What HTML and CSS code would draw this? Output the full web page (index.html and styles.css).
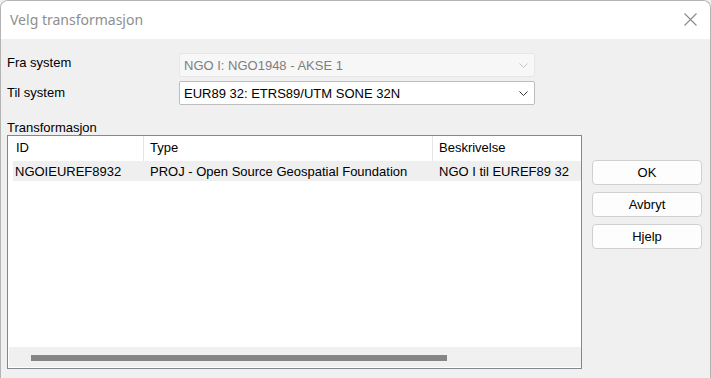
FILE: index.html
```html
<!DOCTYPE html>
<html>
<head>
<meta charset="utf-8">
<title>Velg transformasjon</title>
<link rel="stylesheet" href="styles.css">
</head>
<body>
<div class="window">
  <div class="titlebar">
    <span class="title">Velg transformasjon</span>
    <svg class="close" width="13" height="13" viewBox="0 0 13 13"><path d="M0.5 0.5 L12.5 12.5 M12.5 0.5 L0.5 12.5" stroke="#8a8a8a" stroke-width="1.1" fill="none"/></svg>
  </div>
  <div class="content">
    <div class="form">
      <label class="lbl lbl-fra">Fra system</label>
      <div class="combo disabled">
        <span>NGO I: NGO1948 - AKSE 1</span>
        <svg width="9" height="5" viewBox="0 0 9 5"><path d="M0.5 0.5 L4.5 4.5 L8.5 0.5" stroke="#c4c4c4" fill="none"/></svg>
      </div>
      <label class="lbl lbl-til">Til system</label>
      <div class="combo">
        <span>EUR89 32: ETRS89/UTM SONE 32N</span>
        <svg width="9" height="5" viewBox="0 0 9 5"><path d="M0.5 0.5 L4.5 4.5 L8.5 0.5" stroke="#333" fill="none"/></svg>
      </div>
    </div>
    <div class="section-lbl">Transformasjon</div>
    <div class="main">
      <div class="listbox">
        <div class="header">
          <div class="hcell c1">ID</div>
          <div class="hcell c2">Type</div>
          <div class="hcell c3">Beskrivelse</div>
        </div>
        <div class="rows">
          <div class="row selected">
            <div class="cell r1">NGOIEUREF8932</div>
            <div class="cell r2">PROJ - Open Source Geospatial Foundation</div>
            <div class="cell r3">NGO I til EUREF89 32</div>
          </div>
        </div>
        <div class="hscroll"><div class="thumb"></div></div>
      </div>
      <div class="buttons">
        <button class="btn">OK</button>
        <button class="btn">Avbryt</button>
        <button class="btn">Hjelp</button>
      </div>
    </div>
  </div>
</div>
</body>
</html>
```
FILE: styles.css
```css
html, body {
  margin: 0;
  padding: 0;
  overflow: hidden;
  background: #f0f0f0;
}
body {
  font-family: "Liberation Sans", Arial, sans-serif;
  font-size: 13px;
  color: #000;
}
.window {
  width: 711px;
  height: 378px;
  box-sizing: border-box;
  border: 1px solid #b4b4b4;
  border-bottom: none;
  border-radius: 8px 8px 0 0;
  background: #f0f0f0;
  overflow: hidden;
}
.titlebar {
  height: 38px;
  background: #fff;
  display: flex;
  align-items: center;
  justify-content: space-between;
  padding: 0 13px 0 9px;
}
.title {
  font-family: "Noto Sans", "Open Sans", sans-serif;
  font-size: 14px;
  color: #8e8e8e;
  margin-top: -2px;
}
.close {
  display: block;
  margin-top: -1px;
}
.content {
  padding: 14px 8px 0 6px;
}
.form {
  display: grid;
  grid-template-columns: 172px 356px;
  row-gap: 4px;
}
.lbl {
  line-height: 15px;
}
.lbl-fra {
  padding-top: 2px;
}
.lbl-til {
  padding-top: 4px;
}
.combo {
  height: 24px;
  box-sizing: border-box;
  border: 1px solid #bdbdbd;
  background: #fff;
  display: flex;
  align-items: center;
  justify-content: space-between;
  padding: 0 6px 0 4px;
  border-radius: 2px;
}
.combo.disabled {
  border-color: #e6e6e6;
  background: #f7f7f7;
  color: #7e7e7e;
}
.combo svg {
  display: block;
}
.section-lbl {
  margin-top: 15px;
  line-height: 15px;
}
.main {
  display: flex;
  gap: 10px;
  align-items: flex-start;
}
.listbox {
  width: 575px;
  height: 234px;
  box-sizing: border-box;
  border: 1px solid #828790;
  background: #fff;
  display: flex;
  flex-direction: column;
}
.header {
  display: grid;
  grid-template-columns: 136px 289px 1fr;
  height: 25px;
  align-items: stretch;
}
.hcell {
  display: flex;
  align-items: center;
  line-height: 15px;
  padding-bottom: 2px;
}
.c1 { padding-left: 8px; border-right: 1px solid #e5e5e5; }
.c2 { padding-left: 6px; border-right: 1px solid #e5e5e5; }
.c3 { padding-left: 6px; }
.rows {
  flex: 1;
}
.row {
  display: grid;
  grid-template-columns: 130px 289px 1fr;
  height: 20px;
  margin: 0 0 0 5px;
  align-items: center;
  white-space: nowrap;
}
.row.selected {
  background: #efefef;
}
.r1 { padding-left: 2px; }
.r2 { padding-left: 7px; }
.r3 { padding-left: 7px; overflow: hidden; }
.hscroll {
  height: 20px;
  margin: 0 0 1px 1px;
  background: #f0f0f0;
  display: flex;
  align-items: center;
}
.thumb {
  width: 416px;
  height: 6px;
  margin-left: 22px;
  margin-top: 1px;
  background: #858585;
}
.buttons {
  display: flex;
  flex-direction: column;
  gap: 7px;
  margin-top: 25px;
}
.btn {
  width: 110px;
  height: 25px;
  box-sizing: border-box;
  border: 1px solid #d0d0d0;
  border-radius: 4px;
  background: #fdfdfd;
  font-family: "Liberation Sans", Arial, sans-serif;
  font-size: 13px;
  color: #000;
  padding: 0;
}
```
